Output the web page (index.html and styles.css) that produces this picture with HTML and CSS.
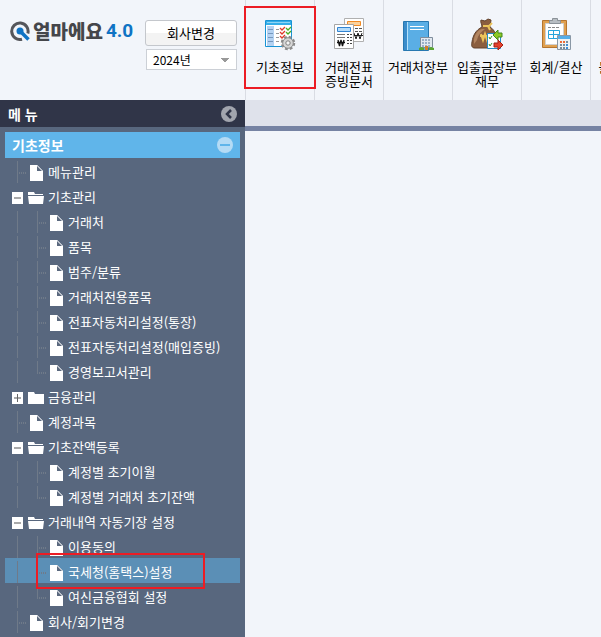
FILE: index.html
```html
<!DOCTYPE html>
<html lang="ko">
<head>
    <meta charset="utf-8">
    <title>얼마에요 4.0</title>
    <link rel="stylesheet" href="styles.css">
</head>
<body>

<!-- shared icons -->
<svg class="defs">
    <symbol id="doc" viewBox="0 0 13 16">
        <path fill="#fff" d="M0 0h7l6 6v10H0z"/>
        <path fill="#5b697f" d="M7 1v5h5z"/>
        <path stroke="#c3c9d2" fill="none" d="M7 0l6 6"/>
    </symbol>
    <symbol id="open" viewBox="0 0 16 12">
        <path fill="#fff" d="M0 0h6l1 2h8v1H0zM0 4h16l-1 8H1z"/>
    </symbol>
    <symbol id="closed" viewBox="0 0 16 12">
        <path fill="#fff" d="M0 0h6l1 2h9v10H0z"/>
    </symbol>
    <symbol id="minus" viewBox="0 0 12 12">
        <path fill="#fff" d="M0 0h11v12H0z"/>
        <path fill="#aaa" d="M2 5h7v2H2z"/>
    </symbol>
    <symbol id="plus" viewBox="0 0 12 12">
        <path fill="#fff" d="M0 0h11v12H0z"/>
        <path fill="#aaa" d="M2 5h7v2H2z"/>
        <path fill="#666" d="M5 2h1v8H5z"/>
    </symbol>
</svg>

<div class="page">
    <header class="top">
        <div class="brand">
            <a href="#" class="logo">
                <svg class="logo-mark" viewBox="0 0 20 20">
                    <path fill="none" stroke="#55565b" stroke-width="3" d="M12 18.200A8.200 8.200 0 1 1 17.800 12.500"/>
                    <circle cx="10" cy="10" r="3.500" fill="#0f73c4"/>
                    <path stroke="#0f73c4" stroke-width="3.500" d="M11 11l7.500 7.500"/>
                </svg>
                <span class="logo-name">얼마에요</span>
                <span class="logo-ver">4.0</span>
            </a>
            <div class="company">
                <button type="button" class="change">회사변경</button>
                <select class="year" aria-label="회계연도">
                    <option>2024년</option>
                </select>
            </div>
        </div>

        <nav class="tools">
            <a href="#" class="tool marked">
                <svg class="tool-icon" viewBox="0 0 32 32">
                    <path fill="#fff" stroke="#1893d4" d="M1.500 2.500h26v26h-26z"/>
                    <path fill="#35aee8" d="M2 3h25v4H2z"/>
                    <path fill="#8fd4f5" d="M3 4h23v1H3z"/>
                    <path fill="#b4d2f2" d="M3 8h7v20H3z"/>
                    <path stroke="#7597bd" d="M4 11.500h5M4 15.500h5M4 19.500h5M4 23.500h5"/>
                    <path stroke="#999" d="M12 11.500h3M12 15.500h3M12 19.500h3M12 23.500h3"/>
                    <path fill="none" stroke="#e03a2c" stroke-width="1.300" d="M16 10l2 2 3-3M16 14l2 2 3-3M16 18l2 2 3-3"/>
                    <path fill="none" stroke="#4cae22" stroke-width="1.300" d="M22 10l2 2 3-3M22 14l2 2 3-3"/>
                    <circle cx="24" cy="25" r="6" fill="none" stroke="#8a8a8a" stroke-width="2.500" stroke-dasharray="2.700 2.012"/>
                    <circle cx="24" cy="25" r="5.300" fill="#d6d6d6" stroke="#8b8b8b"/>
                    <circle cx="24" cy="25" r="2.200" fill="#f5f5f5" stroke="#808080"/>
                </svg>
                <span class="tool-name">기초정보</span>
            </a>
            <a href="#" class="tool">
                <svg class="tool-icon" viewBox="0 0 32 32">
                    <path fill="#fff" stroke="#b0b0b0" d="M11.500.500h19v23h-19z"/>
                    <path fill="#fbd29d" stroke="#f08a24" d="M14.500 3.500h13v4h-13z"/>
                    <path stroke="#555" stroke-dasharray="3 1" d="M22 10.500h7M22 13.500h7"/>
                    <path fill="none" stroke="#222" d="M21 15l2 6 2-6 2 6 2-6M20 17.500h10"/>
                    <path fill="#fff" stroke="#a5a5a5" d="M1.500 6.500h19v24h-19z"/>
                    <path fill="#b5dcfa" stroke="#3284d2" d="M4.500 9.500h13v4h-13z"/>
                    <path stroke="#777" d="M4 16.500h8M4 19.500h8"/>
                    <path stroke="#444" stroke-dasharray="2 1" d="M14 16.500h5M14 19.500h5M14 22.500h5M14 25.500h5"/>
                    <path fill="none" stroke="#111" stroke-width="1.300" d="M5 22l1.500 6L8 22l1.500 6 1.500-6M4 24.500h8"/>
                </svg>
                <span class="tool-name">거래전표<br>증빙문서</span>
            </a>
            <a href="#" class="tool">
                <svg class="tool-icon" viewBox="0 0 32 32">
                    <path fill="#5aaee5" stroke="#2878b0" d="M1.500 3.500h25v29h-25z"/>
                    <path fill="#3b8dcb" d="M2 4h3v28H2z"/>
                    <path stroke="#b5e1fa" d="M5.500 4v28"/>
                    <path stroke="#fff" d="M8 8.500h14M8 11.500h14"/>
                    <path fill="#e2e8ef" stroke="#7f8d9c" d="M18.500 19.500h12v10h-12z"/>
                    <path stroke="#9cb0c6" stroke-dasharray="2 1" stroke-width="2" d="M20 22h9M20 25h9M20 28h9"/>
                    <path fill="#d0802c" d="M23 28h3v4h-3z"/>
                    <path fill="#5ba832" d="M17 32v-2l2-1 3 1v2zM27 32v-2l2-1 3 1v2z"/>
                </svg>
                <span class="tool-name">거래처장부</span>
            </a>
            <a href="#" class="tool">
                <svg class="tool-icon" viewBox="0 0 32 32">
                    <path fill="#8b5e3f" stroke="#62422c" d="M11 9c0-3-2-5-1-7l4 1 3-2 3 1c0 3-2 5-1 7 5 3 7 9 7 15 0 5-2 6-5 6H4c-3 0-4-2-3-6 1-7 4-12 10-15z"/>
                    <path fill="#b38560" d="M3 21c1-5 4-9 8-10h3c-4 3-7 6-8 11l-3 4z"/>
                    <path fill="none" stroke="#ecc45a" stroke-width="2" d="M12 8h6l3-3M17 8l2 4M10 16l2 6 2-6 2 6 2-6M9 18h8"/>
                    <path fill="#fff" stroke="#238bc6" d="M16.500 15.500h13v15h-13z"/>
                    <path fill="none" stroke="#3b9b28" d="M18 19l1 2 2-3M18 26l1 2 2-3"/>
                    <path fill="#8dc925" stroke="#43871b" d="M22 17l5-5v3h4v4h-4v3z"/>
                    <path fill="#e5412c" stroke="#9e2016" d="M32 27l-5-5v3h-4v4h4v3z"/>
                </svg>
                <span class="tool-name">입출금장부<br>재무</span>
            </a>
            <a href="#" class="tool">
                <svg class="tool-icon" viewBox="0 0 32 32">
                    <path fill="#e0a04f" stroke="#b5752f" d="M2.500 2.500h24v27h-24z"/>
                    <path fill="#fff" stroke="#d0d0d0" d="M5.500 5.500h18v21h-18z"/>
                    <path fill="#b7bdc2" stroke="#8b9298" d="M9.500 5.500v-3h3v-2h5v2h3v3z"/>
                    <path stroke="#888" stroke-dasharray="3 1" d="M8 9.500h12"/>
                    <path fill="none" stroke="#28a5dc" d="M8.500 12.500h11v8h-11zM8 16.500h12M13.500 12v9"/>
                    <path fill="#eef2f5" stroke="#8a98a6" d="M17.500 17.500h13v14h-13z"/>
                    <path fill="#55aee8" d="M18 18h12v3H18z"/>
                    <path stroke="#7b8b9b" stroke-width="2" stroke-dasharray="2 1" d="M20 24h9M20 27h9M20 30h9"/>
                    <path stroke="#ee6a35" stroke-width="2" stroke-dasharray="2 1" d="M20 24h5"/>
                    <path stroke="#3c8ed8" stroke-width="2" d="M26 27h2M26 30h2"/>
                </svg>
                <span class="tool-name">회계/결산</span>
            </a>
            <a href="#" class="tool">
                <svg class="tool-icon" viewBox="0 0 32 32"></svg>
                <span class="tool-name">물류/유통</span>
            </a>
        </nav>
    </header>

    <div class="body">
        <aside class="side">
            <div class="side-head">
                <span>메 뉴</span>
                <button type="button" class="round" aria-label="메뉴 닫기">
                    <svg viewBox="0 0 16 16">
                        <circle cx="8" cy="8" r="8" fill="#a2a5ae"/>
                        <path fill="none" stroke="#303548" stroke-width="2.500" d="M10 4L6 8l4 4"/>
                    </svg>
                </button>
            </div>
            <div class="group">
                <span>기초정보</span>
                <button type="button" class="round" aria-label="접기">
                    <svg viewBox="0 0 16 16">
                        <circle cx="8" cy="8" r="8" fill="#b4dbf5"/>
                        <path fill="#60b5ea" d="M3 7h10v2H3z"/>
                    </svg>
                </button>
            </div>

            <ul class="tree">
                <li><a href="#" class="row leaf"><svg class="doc"><use href="#doc"/></svg>메뉴관리</a></li>
                <li>
                    <a href="#" class="row"><svg class="box"><use href="#minus"/></svg><svg class="folder"><use href="#open"/></svg>기초관리</a>
                    <ul>
                        <li><a href="#" class="row leaf"><svg class="doc"><use href="#doc"/></svg>거래처</a></li>
                        <li><a href="#" class="row leaf"><svg class="doc"><use href="#doc"/></svg>품목</a></li>
                        <li><a href="#" class="row leaf"><svg class="doc"><use href="#doc"/></svg>범주/분류</a></li>
                        <li><a href="#" class="row leaf"><svg class="doc"><use href="#doc"/></svg>거래처전용품목</a></li>
                        <li><a href="#" class="row leaf"><svg class="doc"><use href="#doc"/></svg>전표자동처리설정(통장)</a></li>
                        <li><a href="#" class="row leaf"><svg class="doc"><use href="#doc"/></svg>전표자동처리설정(매입증빙)</a></li>
                        <li><a href="#" class="row leaf last"><svg class="doc"><use href="#doc"/></svg>경영보고서관리</a></li>
                    </ul>
                </li>
                <li><a href="#" class="row"><svg class="box"><use href="#plus"/></svg><svg class="folder"><use href="#closed"/></svg>금융관리</a></li>
                <li><a href="#" class="row leaf"><svg class="doc"><use href="#doc"/></svg>계정과목</a></li>
                <li>
                    <a href="#" class="row"><svg class="box"><use href="#minus"/></svg><svg class="folder"><use href="#open"/></svg>기초잔액등록</a>
                    <ul>
                        <li><a href="#" class="row leaf"><svg class="doc"><use href="#doc"/></svg>계정별 초기이월</a></li>
                        <li><a href="#" class="row leaf last"><svg class="doc"><use href="#doc"/></svg>계정별 거래처 초기잔액</a></li>
                    </ul>
                </li>
                <li>
                    <a href="#" class="row"><svg class="box"><use href="#minus"/></svg><svg class="folder"><use href="#open"/></svg>거래내역 자동기장 설정</a>
                    <ul>
                        <li><a href="#" class="row leaf"><svg class="doc"><use href="#doc"/></svg>이용동의</a></li>
                        <li class="selected"><a href="#" class="row leaf"><svg class="doc"><use href="#doc"/></svg>국세청(홈택스)설정</a></li>
                        <li><a href="#" class="row leaf last"><svg class="doc"><use href="#doc"/></svg>여신금융협회 설정</a></li>
                    </ul>
                </li>
                <li><a href="#" class="row leaf"><svg class="doc"><use href="#doc"/></svg>회사/회기변경</a></li>
            </ul>
        </aside>

        <main class="content">
            <div class="tabs"></div>
        </main>
    </div>
</div>

</body>
</html>
```

FILE: styles.css
```css
* {
    box-sizing: border-box;
}

body {
    margin: 0;
    background: #f2f5fa;
    color: #000;
    font-family: "Noto Sans CJK KR", sans-serif;
    font-size: 13px;
    line-height: 16px;
}

a {
    color: inherit;
    text-decoration: none;
}

ul {
    list-style: none;
    margin: 0;
    padding: 0;
}

svg {
    display: block;
    flex: none;
}

.defs {
    display: none;
}

.page {
    display: flex;
    flex-direction: column;
    min-height: 100vh;
    overflow: hidden;
}

/* top bar */
.top {
    display: flex;
    min-height: 100px;
}

.brand {
    display: flex;
    flex: none;
    width: 245px;
    justify-content: space-between;
    padding: 20px 8px 0 10px;
}

.logo {
    display: flex;
    height: 22px;
    align-items: center;
    gap: 3px;
    font-size: 19px;
    font-weight: 900;
    line-height: 22px;
    color: #45464a;
}

.logo-mark {
    width: 20px;
    height: 20px;
}

.logo-ver {
    color: #0f73c4;
    font-family: "Liberation Sans Narrow", Roboto, sans-serif;
    font-weight: bold;
}

.company {
    display: flex;
    flex-direction: column;
    gap: 3px;
    width: 92px;
}

.change {
    height: 26px;
    padding: 0;
    border: 1px solid #c4c7cc;
    border-radius: 3px;
    background: linear-gradient(#fff 50%, #f3f3f3 50%);
    font: inherit;
    color: #000;
}

.year {
    appearance: none;
    height: 21px;
    margin-left: 1px;
    padding: 0 6px;
    border: 1px solid #ccd0d6;
    border-radius: 0;
    background: conic-gradient(from -45deg at 50% 100%, #999 90deg, transparent 0) no-repeat right 7px center / 8px 4px, #fff;
    background: linear-gradient(45deg, transparent 50%, #999 50%) no-repeat right 11px center / 4px 4px, linear-gradient(-45deg, transparent 50%, #999 50%) no-repeat right 7px center / 4px 4px, #fff;
    font: inherit;
    font-size: 12px;
    color: #000;
}

.tools {
    display: flex;
    flex: 1;
    min-width: 0;
}

.tool {
    position: relative;
    display: flex;
    flex: none;
    flex-direction: column;
    align-items: center;
    width: 69px;
    padding-top: 18px;
    border-left: 1px solid #d9dce3;
    text-align: center;
    white-space: nowrap;
}

.tool-icon {
    width: 32px;
    height: 32px;
    margin-bottom: 10px;
    overflow: visible;
}

.tool-name {
    line-height: 14px;
}

/* red frames round the items to click */
.marked::after {
    content: "";
    position: absolute;
    z-index: 1;
    inset: 6px -2px 11px -2px;
    border: 2px solid #ec1c24;
}

/* side menu */
.body {
    display: flex;
    flex: 1;
}

.side {
    flex: none;
    width: 245px;
    background: #58677e;
    color: #fff;
}

.side-head,
.group {
    display: flex;
    align-items: center;
    justify-content: space-between;
    font-size: 14px;
    font-weight: bold;
}

.side-head {
    height: 27px;
    padding: 0 8px;
    background: #303548;
}

.group {
    height: 26px;
    margin: 5px 5px 0;
    padding: 0 7px;
    background: #60b5ea;
}

.round {
    width: 16px;
    height: 16px;
    padding: 0;
    border: 0;
    background: none;
}

.tree {
    padding: 0 5px;
}

.row {
    position: relative;
    display: flex;
    align-items: center;
    gap: 4px;
    height: 25px;
    padding: 3px 0 0 7px;
    white-space: nowrap;
}

.row svg {
    margin-top: 2px;
}

.leaf {
    gap: 5px;
    padding-left: 25px;
}

.tree ul .leaf {
    padding-left: 45px;
}

.doc {
    width: 13px;
    height: 16px;
}

.folder {
    width: 16px;
    height: 12px;
}

.box {
    width: 12px;
    height: 12px;
}

/* guide lines */
.tree .leaf {
    background:
        linear-gradient(#6f7a89, #6f7a89) no-repeat 12px 3px / 1px 22px,
        repeating-linear-gradient(90deg, #6f7a89 0 1px, transparent 1px 2px) no-repeat 14px 14px / 8px 2px;
}

.tree ul .leaf {
    background:
        linear-gradient(#6f7a89, #6f7a89) no-repeat 12px 3px / 1px 22px,
        linear-gradient(#6f7a89, #6f7a89) no-repeat 32px 3px / 1px 22px,
        repeating-linear-gradient(90deg, #6f7a89 0 1px, transparent 1px 2px) no-repeat 34px 14px / 8px 2px;
}

.tree ul .last {
    background:
        linear-gradient(#6f7a89, #6f7a89) no-repeat 12px 3px / 1px 22px,
        linear-gradient(#6f7a89, #6f7a89) no-repeat 32px 3px / 1px 13px,
        repeating-linear-gradient(90deg, #6f7a89 0 1px, transparent 1px 2px) no-repeat 34px 14px / 8px 2px;
}

.selected {
    background: #5b8fb6;
}

.selected .row::after {
    content: "";
    position: absolute;
    z-index: 1;
    inset: -5px 35px -6px 31px;
    border: 2px solid #ec1c24;
}

/* work area */
.content {
    flex: 1;
    min-width: 0;
}

.tabs {
    height: 31px;
    border-bottom: 5px solid #7683a3;
    background: #dfe2eb;
}
```
